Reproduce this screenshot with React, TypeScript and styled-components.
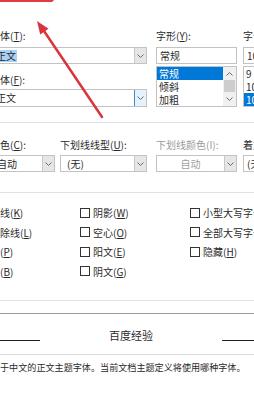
import React from "react";
import styled, { createGlobalStyle } from "styled-components";

const GlobalStyle = createGlobalStyle`
  html, body {
    margin: 0;
    padding: 0;
    background: #ffffff;
  }
  body {
    font-family: "Noto Sans CJK SC", "Noto Sans", sans-serif;
    font-size: 10px;
    color: #2a2a2a;
  }
`;

const Page = styled.div`
  position: relative;
  width: 254px;
  height: 400px;
  overflow: hidden;
  background: #ffffff;
`;

const FontRow = styled.div`
  display: flex;
  align-items: flex-start;
  padding-top: 30px;
`;

const Column = styled.div<{ $left?: number; $width?: number }>`
  display: flex;
  flex-direction: column;
  flex: ${(p) => (p.$width ? "none" : "1")};
  width: ${(p) => (p.$width ? `${p.$width}px` : "auto")};
  margin-left: ${(p) => p.$left || 0}px;
  min-width: 0;
`;

const Label = styled.div<{ $disabled?: boolean; $gap?: number; $top?: number }>`
  height: 12px;
  line-height: 12px;
  white-space: nowrap;
  margin-top: ${(p) => p.$top || 0}px;
  margin-bottom: ${(p) => (p.$gap === undefined ? 5 : p.$gap)}px;
  color: ${(p) => (p.$disabled ? "#9a9a9a" : "#2a2a2a")};

  u {
    text-decoration-thickness: 1px;
    text-underline-offset: 1px;
  }
`;

const Field = styled.div<{ $cut?: boolean; $height?: number; $open?: boolean }>`
  position: relative;
  display: flex;
  align-items: center;
  box-sizing: border-box;
  height: ${(p) => p.$height || 17}px;
  border: 1px solid #c3c3c3;
  border-left: ${(p) => (p.$cut ? "none" : "1px solid #c3c3c3")};
  border-right: ${(p) => (p.$open ? "none" : "1px solid #c3c3c3")};
  background: #ffffff;
  overflow: hidden;
  white-space: nowrap;
`;

const FieldText = styled.span<{ $offset?: number; $selected?: boolean; $disabled?: boolean; $center?: boolean }>`
  flex: ${(p) => (p.$center ? "1" : "none")};
  text-align: ${(p) => (p.$center ? "center" : "left")};
  margin-left: ${(p) => p.$offset || 0}px;
  padding: 0 1px;
  line-height: 12px;
  background: ${(p) => (p.$selected ? "#a9d1f4" : "transparent")};
  color: ${(p) => (p.$disabled ? "#a0a0a0" : "#2a2a2a")};
`;

const DropButton = styled.div<{ $focused?: boolean }>`
  display: flex;
  align-items: center;
  justify-content: center;
  box-sizing: border-box;
  margin-left: auto;
  width: 13px;
  align-self: stretch;
  margin-top: -1px;
  margin-bottom: -1px;
  margin-right: -1px;
  border: 1px solid ${(p) => (p.$focused ? "#3c8ad6" : "#c8c8c8")};
  background: ${(p) => (p.$focused ? "#e5f1fb" : "#e6e6e6")};
`;

const Chevron = ({ up }: { up?: boolean }) => (
  <svg width="7" height="4" viewBox="0 0 7 4">
    <path
      d={up ? "M0.5 3.5 L3.5 0.5 L6.5 3.5" : "M0.5 0.5 L3.5 3.5 L6.5 0.5"}
      fill="none"
      stroke="#6a6a6a"
      strokeWidth="1"
    />
  </svg>
);

const ListBox = styled.div<{ $open?: boolean }>`
  display: flex;
  box-sizing: border-box;
  height: 41px;
  margin-top: 2px;
  border: 1px solid #c3c3c3;
  border-right: ${(p) => (p.$open ? "none" : "1px solid #c3c3c3")};
  overflow: hidden;
`;

const ListItems = styled.div`
  display: flex;
  flex-direction: column;
  flex: 1;
  min-width: 0;
`;

const ListItem = styled.div<{ $selected?: boolean }>`
  height: 13px;
  line-height: 13px;
  padding-left: 2px;
  white-space: nowrap;
  overflow: hidden;
  background: ${(p) => (p.$selected ? "#0078d7" : "transparent")};
  color: ${(p) => (p.$selected ? "#ffffff" : "#2a2a2a")};
`;

const ScrollBar = styled.div`
  display: flex;
  flex-direction: column;
  align-items: center;
  width: 13px;
  background: #f0f0f0;
`;

const ScrollArrow = styled.div`
  display: flex;
  align-items: center;
  justify-content: center;
  height: 13px;
  width: 100%;
`;

const ScrollThumb = styled.div`
  width: 11px;
  height: 12px;
  background: #cdcdcd;
`;

const Divider = styled.div<{ $top: number }>`
  height: 1px;
  margin-top: ${(p) => p.$top}px;
  background: #e2e2e2;
`;

const ColorRow = styled.div`
  display: flex;
  align-items: flex-start;
  padding-top: 16px;
`;

const EffectsGrid = styled.div`
  display: grid;
  grid-template-columns: 80px 110px 1fr;
  grid-auto-rows: 19.5px;
  margin-top: 10px;
`;

const Option = styled.div`
  display: flex;
  align-items: center;
  gap: 3px;
  white-space: nowrap;
  overflow: hidden;
`;

const CheckBox = styled.span`
  flex: none;
  box-sizing: border-box;
  width: 10px;
  height: 10px;
  border: 1px solid #333333;
  background: #ffffff;
`;

const PreviewBox = styled.div`
  display: grid;
  grid-template-columns: 40px 1fr 32px;
  height: 40px;
  margin-top: 12px;
  border-top: 1px solid #9b9b9b;
  border-bottom: 1px solid #dadada;
`;

const BaselineRule = styled.div`
  height: 1px;
  margin-top: 26px;
  background: #222222;
`;

const PreviewText = styled.div`
  padding-top: 14px;
  line-height: 14px;
  font-size: 11px;
  text-align: center;
  color: #2a2a2a;
`;

const Description = styled.div`
  margin-top: 6px;
  line-height: 12px;
  font-size: 9.1px;
  white-space: nowrap;
  color: #2a2a2a;
`;

const Highlight = styled.div`
  position: absolute;
  top: -22px;
  left: -10px;
  width: 64px;
  height: 24px;
  box-sizing: border-box;
  border: 2px solid #e23c40;
  border-radius: 3px;
`;

const ArrowLayer = styled.svg`
  position: absolute;
  top: 0;
  left: 0;
  pointer-events: none;
`;

const Combo = ({
  children,
  cut,
  open,
  focused,
  height,
}: {
  children: React.ReactNode;
  cut?: boolean;
  open?: boolean;
  focused?: boolean;
  height?: number;
}) => (
  <Field $cut={cut} $open={open} $height={height}>
    {children}
    {!open && (
      <DropButton $focused={focused}>
        <Chevron />
      </DropButton>
    )}
  </Field>
);

const effects: { text: string; key: string; box: boolean }[][] = [
  [
    { text: "线", key: "K", box: false },
    { text: "阴影", key: "W", box: true },
    { text: "小型大写字母", key: "M", box: true },
  ],
  [
    { text: "除线", key: "L", box: false },
    { text: "空心", key: "O", box: true },
    { text: "全部大写字母", key: "A", box: true },
  ],
  [
    { text: "", key: "P", box: false },
    { text: "阳文", key: "E", box: true },
    { text: "隐藏", key: "H", box: true },
  ],
  [
    { text: "", key: "B", box: false },
    { text: "阴文", key: "G", box: true },
  ],
];

export default function App() {
  return (
    <Page>
      <GlobalStyle />

      <FontRow>
        <Column $width={147}>
          <Label>
            体(<u>T</u>):
          </Label>
          <Combo cut>
            <FieldText $offset={-5} $selected>
              正文
            </FieldText>
          </Combo>
          <Label $top={10} $gap={3}>
            体(<u>F</u>):
          </Label>
          <Combo cut focused height={18}>
            <FieldText $offset={-5}>正文</FieldText>
          </Combo>
        </Column>

        <Column $left={9} $width={81}>
          <Label>
            字形(<u>Y</u>):
          </Label>
          <Field>
            <FieldText $offset={2}>常规</FieldText>
          </Field>
          <ListBox>
            <ListItems>
              <ListItem $selected>常规</ListItem>
              <ListItem>倾斜</ListItem>
              <ListItem>加粗</ListItem>
            </ListItems>
            <ScrollBar>
              <ScrollArrow>
                <Chevron up />
              </ScrollArrow>
              <ScrollThumb />
              <ScrollArrow>
                <Chevron />
              </ScrollArrow>
            </ScrollBar>
          </ListBox>
        </Column>

        <Column $left={6}>
          <Label>
            字号(<u>S</u>):
          </Label>
          <Field $open>
            <FieldText $offset={2}>10</FieldText>
          </Field>
          <ListBox $open>
            <ListItems>
              <ListItem>9</ListItem>
              <ListItem>10</ListItem>
              <ListItem $selected>10.5</ListItem>
            </ListItems>
          </ListBox>
        </Column>
      </FontRow>

      <Divider $top={15} />

      <ColorRow>
        <Column $width={55}>
          <Label $gap={4}>
            色(<u>C</u>):
          </Label>
          <Combo cut>
            <FieldText $offset={-4}>自动</FieldText>
          </Combo>
        </Column>
        <Column $left={5} $width={87}>
          <Label $gap={4}>
            下划线线型(<u>U</u>):
          </Label>
          <Combo>
            <FieldText $offset={5}>(无)</FieldText>
          </Combo>
        </Column>
        <Column $left={9} $width={81}>
          <Label $gap={4} $disabled>
            下划线颜色(I):
          </Label>
          <Combo>
            <FieldText $center $disabled>
              自动
            </FieldText>
          </Combo>
        </Column>
        <Column $left={6}>
          <Label $gap={4}>着重号(·):</Label>
          <Combo open>
            <FieldText $offset={2}>(无)</FieldText>
          </Combo>
        </Column>
      </ColorRow>

      <Divider $top={20} />

      <EffectsGrid>
        {effects.flat().map((item, i) => (
          <Option key={`effect-${i}`}>
            {item.box && <CheckBox />}
            <span>
              {item.text}(<u>{item.key}</u>)
            </span>
          </Option>
        ))}
      </EffectsGrid>

      <Divider $top={19} />

      <PreviewBox>
        <BaselineRule />
        <PreviewText>百度经验</PreviewText>
        <BaselineRule />
      </PreviewBox>

      <Description>于中文的正文主题字体。当前文档主题定义将使用哪种字体。</Description>

      <Highlight />
      <ArrowLayer width="254" height="400" viewBox="0 0 254 400">
        <line
          x1="102"
          y1="117"
          x2="44"
          y2="31"
          stroke="#d8353d"
          strokeWidth="2.5"
          strokeLinecap="round"
        />
        <polygon points="37,21 48.5,28.8 40.2,34.6" fill="#d8353d" />
      </ArrowLayer>
    </Page>
  );
}
